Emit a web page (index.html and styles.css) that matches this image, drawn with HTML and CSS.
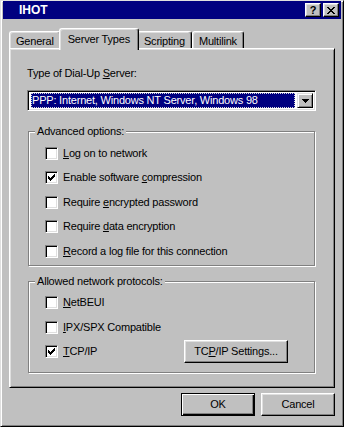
FILE: index.html
```html
<!DOCTYPE html>
<html lang="en">
<head>
  <meta charset="UTF-8" />
  <title>IHOT</title>
  <link rel="stylesheet" href="styles.css">
</head>
<body>
  <div class="window">
    <div class="titlebar">
      <span class="title">IHOT</span>
      <div class="caption-buttons">
        <div class="cap-btn help">?</div>
        <div class="cap-btn">
          <svg width="8" height="7" viewBox="0 0 8 7" shape-rendering="crispEdges">
            <path d="M0 0h2v1h-2z M6 0h2v1h-2z M1 1h2v1h-2z M5 1h2v1h-2z M2 2h4v1h-4z M3 3h2v1h-2z M2 4h4v1h-4z M1 5h2v1h-2z M5 5h2v1h-2z M0 6h2v1h-2z M6 6h2v1h-2z" fill="#000"/>
          </svg>
        </div>
      </div>
    </div>

    <div class="content">
      <div class="tabs">
        <div class="tab">General</div>
        <div class="tab active">Server Types</div>
        <div class="tab">Scripting</div>
        <div class="tab">Multilink</div>
      </div>

      <div class="panel">
        <div class="field-label">Type of Dial-Up <u>S</u>erver:</div>
        <div class="combo">
          <div class="combo-value"><span class="selection">PPP: Internet, Windows NT Server, Windows 98</span></div>
          <div class="combo-btn">
            <svg width="7" height="4" viewBox="0 0 7 4" shape-rendering="crispEdges">
              <path d="M0 0h7v1h-7z M1 1h5v1h-5z M2 2h3v1h-3z M3 3h1v1h-1z" fill="#000"/>
            </svg>
          </div>
        </div>

        <div class="group advanced">
          <span class="legend">Advanced options:</span>
          <div class="check-row"><span class="box"></span><span><u>L</u>og on to network</span></div>
          <div class="check-row"><span class="box checked"></span><span>Enable software <u>c</u>ompression</span></div>
          <div class="check-row"><span class="box"></span><span>Require <u>e</u>ncrypted password</span></div>
          <div class="check-row"><span class="box"></span><span>Require <u>d</u>ata encryption</span></div>
          <div class="check-row"><span class="box"></span><span><u>R</u>ecord a log file for this connection</span></div>
        </div>

        <div class="group protocols">
          <span class="legend">Allowed network protocols:</span>
          <div class="check-row"><span class="box"></span><span><u>N</u>etBEUI</span></div>
          <div class="check-row"><span class="box"></span><span><u>I</u>PX/SPX Compatible</span></div>
          <div class="check-row">
            <span class="box checked"></span><span><u>T</u>CP/IP</span>
            <div class="btn settings">TC<u>P</u>/IP Settings...</div>
          </div>
        </div>
      </div>

      <div class="actions">
        <div class="btn default">OK</div>
        <div class="btn">Cancel</div>
      </div>
    </div>
  </div>
</body>
</html>
```

FILE: styles.css
```css
* {
  box-sizing: border-box;
  margin: 0;
  padding: 0;
}

body {
  font-family: 'Liberation Sans', Arial, sans-serif;
  font-size: 11px;
  letter-spacing: -0.2px;
  line-height: 13px;
  color: #000;
  background-color: #c0c0c0;
}

u {
  text-decoration: underline;
  text-underline-offset: 1px;
}

.window {
  width: 344px;
  height: 427px;
  display: flex;
  flex-direction: column;
  background-color: #c0c0c0;
  border: 1px solid;
  border-color: #dfdfdf #000 #000 #dfdfdf;
  box-shadow: inset 1px 1px #fff, inset -1px -1px #808080;
  padding: 0 2px;
}

.titlebar {
  height: 18px;
  display: flex;
  align-items: center;
  background-color: #000080;
  color: white;
  padding: 0 2px 0 16px;
}

.title {
  flex: 1;
  font-weight: bold;
  font-size: 12px;
  letter-spacing: 0;
}

.caption-buttons {
  display: flex;
  gap: 2px;
}

.cap-btn {
  width: 16px;
  height: 14px;
  display: flex;
  align-items: center;
  justify-content: center;
  background-color: #c0c0c0;
  border: 1px solid;
  border-color: #fff #000 #000 #fff;
  box-shadow: inset -1px -1px #808080, inset 1px 1px #dfdfdf;
}

.cap-btn.help {
  color: #000;
  font-weight: bold;
  font-size: 11px;
  padding-top: 1px;
}

.content {
  padding: 9px 6px 0;
}

.tabs {
  display: flex;
  align-items: flex-end;
  height: 20px;
  position: relative;
  z-index: 1;
}

.tab {
  height: 17px;
  padding: 3px 6px 0;
  background-color: #c0c0c0;
  border: 1px solid;
  border-bottom: none;
  border-color: #fff #000 #000 #fff;
  border-radius: 3px 3px 0 0;
  box-shadow: inset -1px 0 #808080, inset 1px 1px #dfdfdf;
}

.tab.active {
  height: 22px;
  margin: 0 -2px -2px;
  padding: 4px 8px 0;
  position: relative;
}

.panel {
  border: 1px solid;
  border-color: #fff #000 #000 #fff;
  box-shadow: inset 1px 1px #dfdfdf, inset -1px -1px #808080;
  padding: 18px 18px 14px 17px;
}

.combo {
  margin-top: 10px;
  height: 21px;
  display: flex;
  background-color: white;
  border: 1px solid;
  border-color: #808080 #fff #fff #808080;
  box-shadow: inset 1px 1px #000, inset -1px -1px #dfdfdf;
  padding: 2px 2px 2px 3px;
}

.combo-value {
  flex: 1;
  padding-right: 2px;
}

.selection {
  display: block;
  height: 15px;
  line-height: 13px;
  background-color: #000080;
  color: white;
  border: 1px dotted #d8d8d8;
}

.combo-btn {
  width: 16px;
  display: flex;
  align-items: center;
  justify-content: center;
  background-color: #c0c0c0;
  border: 1px solid;
  border-color: #dfdfdf #000 #000 #dfdfdf;
  box-shadow: inset 1px 1px #fff, inset -1px -1px #808080;
}

.group {
  position: relative;
  margin: 20px 1px 0;
  border: 1px solid #808080;
  box-shadow: inset 1px 1px #fff, 1px 1px #fff;
  padding: 9px 0 1px 16px;
}

.group.protocols {
  margin-top: 15px;
  padding-bottom: 8px;
}

.legend {
  position: absolute;
  top: -7px;
  left: 6px;
  padding: 0 2px;
  background-color: #c0c0c0;
}

.check-row {
  height: 24.5px;
  display: flex;
  align-items: center;
  gap: 5px;
}

.box {
  width: 13px;
  height: 13px;
  flex-shrink: 0;
  background-color: white;
  border: 1px solid;
  border-color: #808080 #fff #fff #808080;
  box-shadow: inset 1px 1px #000, inset -1px -1px #dfdfdf;
}

.box.checked {
  background: white url("data:image/svg+xml,%3Csvg xmlns='http://www.w3.org/2000/svg' width='7' height='7' shape-rendering='crispEdges'%3E%3Cpath d='M6 0h1v1h-1z M5 1h2v1h-2z M0 2h1v1h-1z M4 2h3v1h-3z M0 3h2v1h-2z M3 3h3v1h-3z M0 4h5v1h-5z M1 5h3v1h-3z M2 6h1v1h-1z'/%3E%3C/svg%3E") no-repeat 2px 2px;
}

.btn {
  height: 23px;
  display: flex;
  align-items: center;
  justify-content: center;
  background-color: #c0c0c0;
  border: 1px solid;
  border-color: #fff #000 #000 #fff;
  box-shadow: inset -1px -1px #808080, inset 1px 1px #dfdfdf;
}

.btn.settings {
  width: 104px;
  margin-left: auto;
  margin-right: 26px;
}

.actions {
  margin-top: 5px;
  display: flex;
  justify-content: flex-end;
  gap: 6px;
}

.actions .btn {
  width: 74px;
}

.btn.default {
  border-color: #000;
  box-shadow: inset 1px 1px #fff, inset -1px -1px #000, inset -2px -2px #808080;
}
```
